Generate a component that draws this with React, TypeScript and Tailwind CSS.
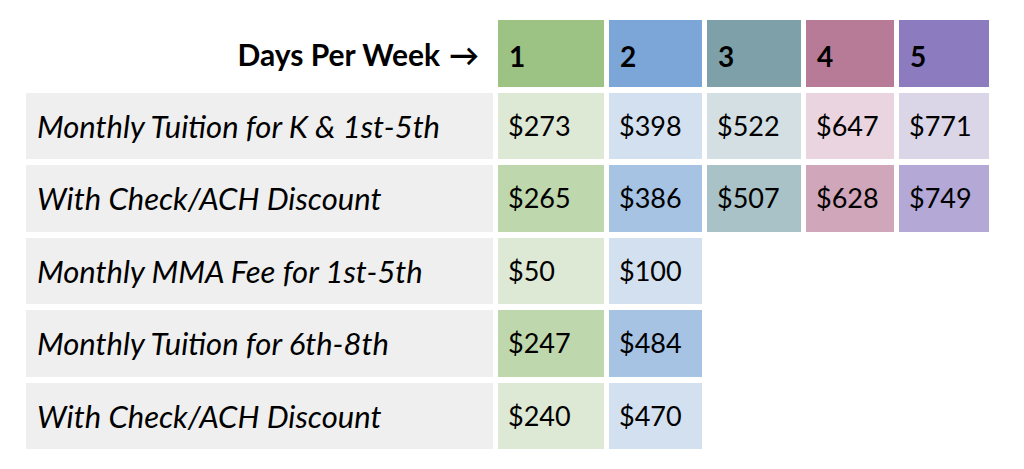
const cols = [
  { day: '1', head: 'bg-[#9dc384]', light: 'bg-[#dde9d5]', mid: 'bg-[#bed7ac]' },
  { day: '2', head: 'bg-[#7ba6d7]', light: 'bg-[#d3e0f0]', mid: 'bg-[#a6c3e4]' },
  { day: '3', head: 'bg-[#7ea1a9]', light: 'bg-[#d4dfe3]', mid: 'bg-[#a9c2c7]' },
  { day: '4', head: 'bg-[#b77b98]', light: 'bg-[#e9d4df]', mid: 'bg-[#d0a6bb]' },
  { day: '5', head: 'bg-[#8c7cbf]', light: 'bg-[#dbd5e8]', mid: 'bg-[#b4a8d6]' },
];

const rows = [
  { label: 'Monthly Tuition for K & 1st-5th', tone: 'light', values: ['$273', '$398', '$522', '$647', '$771'] },
  { label: 'With Check/ACH Discount', tone: 'mid', values: ['$265', '$386', '$507', '$628', '$749'] },
  { label: 'Monthly MMA Fee for 1st-5th', tone: 'light', values: ['$50', '$100'] },
  { label: 'Monthly Tuition for 6th-8th', tone: 'mid', values: ['$247', '$484'] },
  { label: 'With Check/ACH Discount', tone: 'light', values: ['$240', '$470'] },
];

export default function App() {
  return (
    <div className="w-[1024px] h-[469px] bg-white pt-[20px] pl-[26px] font-['Lato','Open_Sans',sans-serif] text-black">
      <div className="grid grid-cols-[467px_106px_93px_94px_88px_90px] grid-rows-[repeat(6,66.5px)] gap-x-[5px] gap-y-[6px]">
        {/* header row */}
        <div className="flex items-center justify-end pr-[14px] pt-[2px] text-[30px] font-bold">
          Days Per Week <span className="ml-[9px] font-bold">→</span>
        </div>
        {cols.map((c) => (
          <div key={c.day} className={`${c.head} flex items-center pl-[11px] pt-[6px] text-[28px] font-bold`}>
            {c.day}
          </div>
        ))}

        {rows.map((r, i) => (
          <>
            <div key={`l${i}`} className="bg-[#efefef] flex items-center pl-[11px] text-[31px] italic">
              {r.label}
            </div>
            {cols.map((c, j) =>
              j < r.values.length ? (
                <div
                  key={`v${i}-${j}`}
                  className={`${r.tone === 'light' ? c.light : c.mid} flex items-center pl-[10px] text-[27px]`}
                >
                  {r.values[j]}
                </div>
              ) : (
                <div key={`v${i}-${j}`} />
              )
            )}
          </>
        ))}
      </div>
    </div>
  );
}
